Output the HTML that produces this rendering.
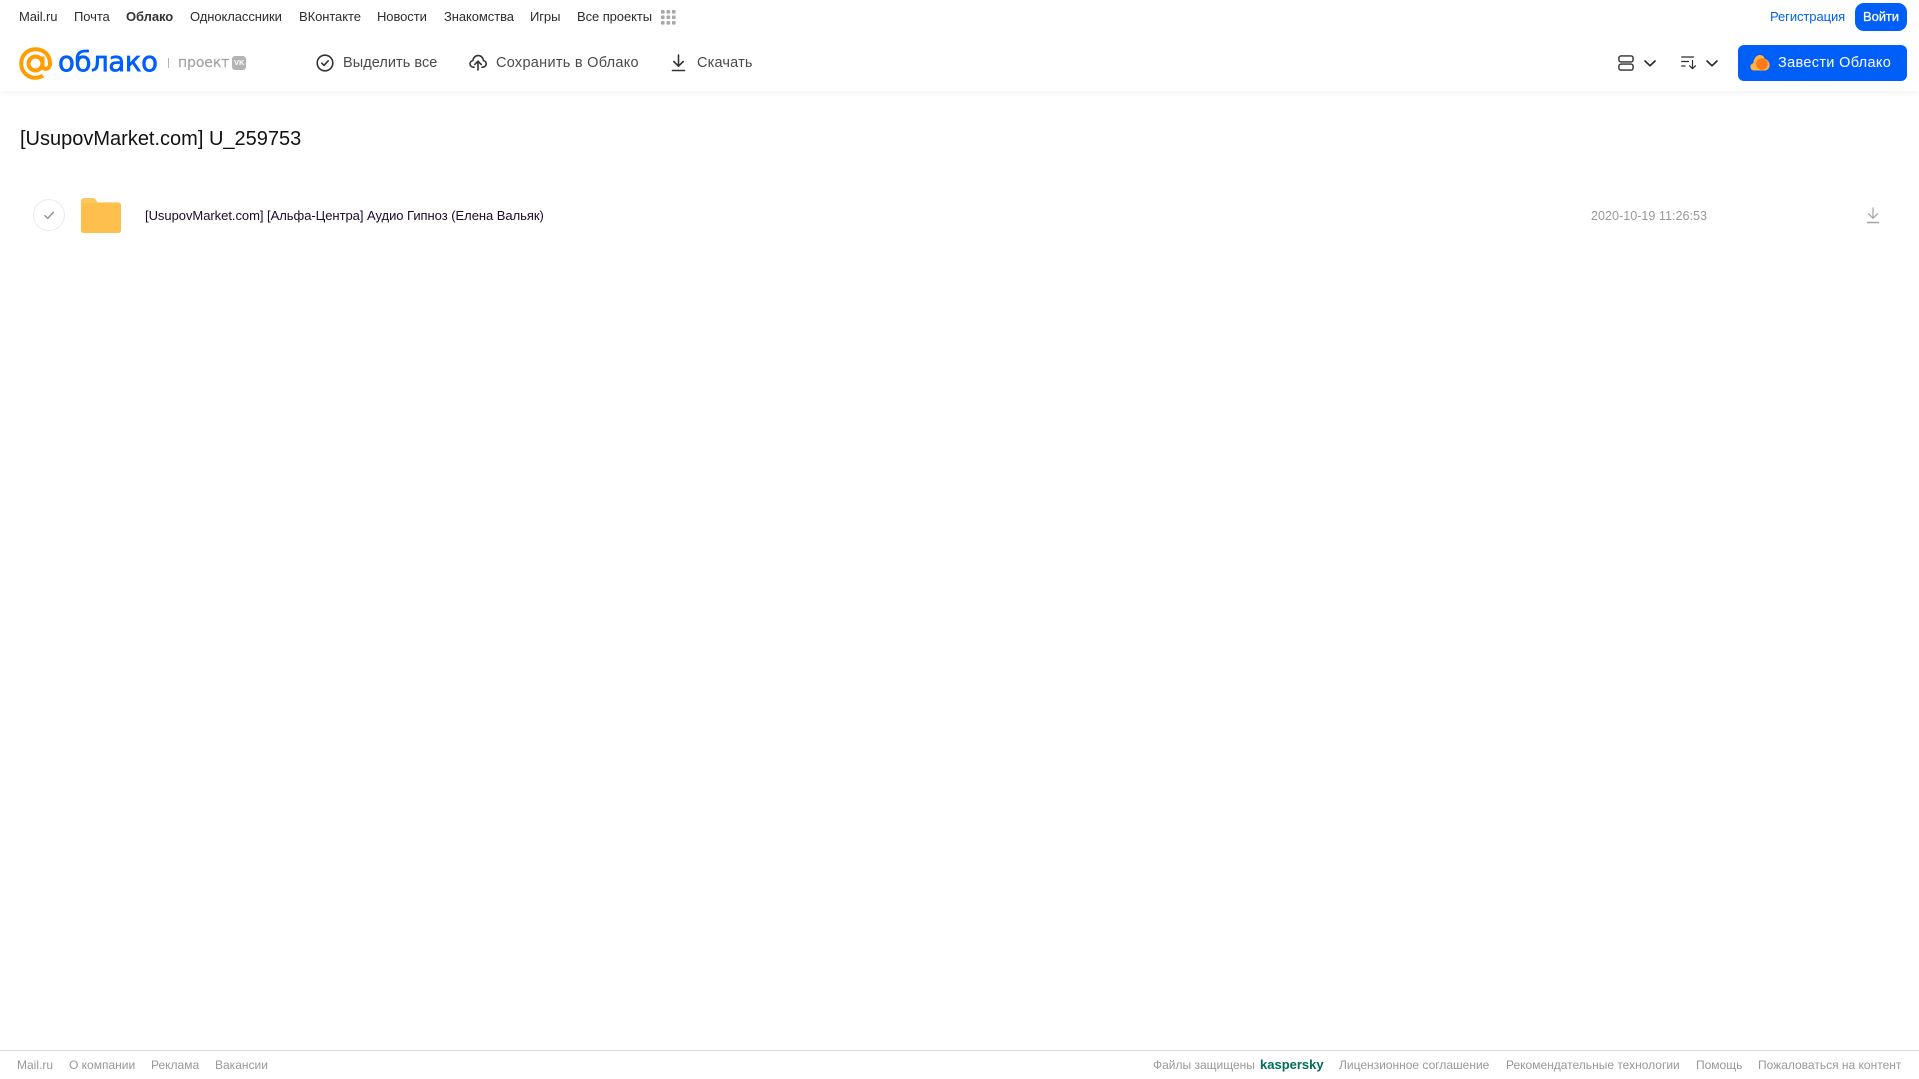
<!DOCTYPE html>
<html lang="ru">
<head>
<meta charset="utf-8">
<title>Облако</title>
<style>
html,body{margin:0;padding:0;background:#fff;width:1919px;height:1079px;overflow:hidden}
body{position:relative;font-family:"Liberation Sans",Arial,sans-serif}
.t{position:absolute;white-space:nowrap;line-height:20px;height:20px}
.n{top:7px;font-size:13px;color:#2c2d2e;letter-spacing:-.08px}
.a{top:53px;font-size:14.5px;color:#4a4a4a;letter-spacing:.2px}
.f{top:1055px;font-size:12px;color:#999}
svg{position:absolute;overflow:visible}
#hd{position:absolute;left:0;top:0;width:1919px;height:91px;background:#fff;box-shadow:0 1px 6px rgba(0,0,0,.07)}
</style>
</head>
<body>
<div id="hd"></div>

<span class="t n" style="left:19px">Mail.ru</span>
<span class="t n" style="left:74px">Почта</span>
<span class="t n" style="left:126px;font-weight:bold;color:#333">Облако</span>
<span class="t n" style="left:190px">Одноклассники</span>
<span class="t n" style="left:299px">ВКонтакте</span>
<span class="t n" style="left:377px">Новости</span>
<span class="t n" style="left:444px">Знакомства</span>
<span class="t n" style="left:530px">Игры</span>
<span class="t n" style="left:577px">Все проекты</span>
<svg style="left:661px;top:10px" width="15" height="15" fill="#a8a8a8">
<rect x="0" y="0" width="3.6" height="3.6" rx=".8"/><rect x="5.5" y="0" width="3.6" height="3.6" rx=".8"/><rect x="11" y="0" width="3.6" height="3.6" rx=".8"/>
<rect x="0" y="5.5" width="3.6" height="3.6" rx=".8"/><rect x="5.5" y="5.5" width="3.6" height="3.6" rx=".8"/><rect x="11" y="5.5" width="3.6" height="3.6" rx=".8"/>
<rect x="0" y="11" width="3.6" height="3.6" rx=".8"/><rect x="5.5" y="11" width="3.6" height="3.6" rx=".8"/><rect x="11" y="11" width="3.6" height="3.6" rx=".8"/>
</svg>

<span class="t n" style="left:1770px;color:#005ff9">Регистрация</span>
<div style="position:absolute;left:1855px;top:3px;width:52px;height:28px;border-radius:9px;background:#005ff9"></div>
<span class="t n" style="left:1863px;color:#fff;-webkit-text-stroke:.25px #fff">Войти</span>

<!-- logo -->
<svg style="left:19px;top:47px" width="34" height="33" viewBox="0 0 34 33" fill="none" stroke="#ff9e00" stroke-width="4">
<circle cx="16.5" cy="16.5" r="7"/>
<path d="M23.5 9.5V18.5C23.5 23.5 31 23 31 16.5C31 7.5 24.5 2.2 16.5 2.2C8.5 2.2 2.2 8.5 2.2 16.5C2.2 24.5 8.5 30.8 16.5 30.8C19.5 30.8 21.8 30 24 28.6"/>
</svg>
<span class="t" style="left:58px;top:49px;height:26px;line-height:26px;font-family:'DejaVu Sans',sans-serif;font-size:27.5px;color:#005ff9;-webkit-text-stroke:.7px #005ff9;letter-spacing:-.33px">облако</span>
<div style="position:absolute;left:168px;top:58px;width:1px;height:10px;background:#b5b5b5"></div>
<span class="t" style="left:178px;top:53px;font-family:'DejaVu Sans',sans-serif;font-size:14px;color:#a3a3a3;-webkit-text-stroke:.2px #a3a3a3;letter-spacing:-.1px">проект</span>
<div style="position:absolute;left:232px;top:56px;width:14px;height:14px;border-radius:3px;background:#b4b4b4"></div>
<span class="t" style="left:234px;top:53px;font-size:7.5px;font-weight:bold;color:#fff">VK</span>

<!-- toolbar -->
<svg style="left:316px;top:54px" width="18" height="18" viewBox="0 0 18 18" fill="none" stroke="#333" stroke-width="1.6" stroke-linecap="round" stroke-linejoin="round">
<circle cx="9" cy="9" r="7.8"/><path d="M5.8 9.2L8 11.4L12.2 6.8"/>
</svg>
<span class="t a" style="left:343px;letter-spacing:.05px">Выделить все</span>

<svg style="left:469px;top:53px" width="18" height="18" viewBox="0 0 18 18" fill="none" stroke="#333" stroke-width="1.6" stroke-linecap="round" stroke-linejoin="round">
<path d="M5 14.2H4.5C2.5 14.2 1 12.7 1 10.9C1 9.2 2.2 7.9 3.8 7.6C4.2 4.7 6.4 2.6 9.2 2.6C12 2.6 14.2 4.7 14.5 7.5C16 7.8 17.2 9.2 17.2 10.9C17.2 12.7 15.7 14.2 13.8 14.2H13"/>
<path d="M9 17V8.5M5.8 11.4L9 8.2L12.2 11.4"/>
</svg>
<span class="t a" style="left:496px;letter-spacing:.28px">Сохранить в Облако</span>

<svg style="left:671px;top:54px" width="15" height="18" viewBox="0 0 15 18" fill="none" stroke="#333" stroke-width="1.6" stroke-linecap="round" stroke-linejoin="round">
<path d="M7.5 1V12M2.8 7.5L7.5 12.2L12.2 7.5"/><path d="M1.5 16.5H13.5"/>
</svg>
<span class="t a" style="left:697px;letter-spacing:.18px">Скачать</span>

<!-- view -->
<svg style="left:1618px;top:55px" width="16" height="16" viewBox="0 0 16 16" fill="none" stroke="#2c2d2e" stroke-width="1.4">
<rect x=".9" y=".9" width="14.2" height="6" rx="2"/><rect x=".9" y="9.1" width="14.2" height="6" rx="2"/>
</svg>
<svg style="left:1644px;top:60px" width="12" height="7" viewBox="0 0 12 7" fill="none" stroke="#2c2d2e" stroke-width="1.7" stroke-linecap="round" stroke-linejoin="round"><path d="M1 1L6 5.8L11 1"/></svg>
<svg style="left:1681px;top:56px" width="16" height="14" viewBox="0 0 16 14" fill="none" stroke="#2c2d2e" stroke-width="1.2" stroke-linecap="round" stroke-linejoin="round">
<path d="M.7 1H12.5M.7 5.5H7.5M.7 10H4"/><path d="M11.5 4.5V12.5M8.6 9.8L11.5 12.7L14.4 9.8"/>
</svg>
<svg style="left:1706px;top:60px" width="12" height="7" viewBox="0 0 12 7" fill="none" stroke="#2c2d2e" stroke-width="1.7" stroke-linecap="round" stroke-linejoin="round"><path d="M1 1L6 5.8L11 1"/></svg>

<div style="position:absolute;left:1738px;top:45px;width:169px;height:36px;border-radius:6px;background:#005ff9"></div>
<svg style="left:1750px;top:54px" width="20" height="17" viewBox="0 0 20 17">
<path d="M4 16.5C1.8 16.5 .4 14.8 .4 12.8C.4 11 1.6 9.6 3.3 9.2C3.8 4.2 6.6 1 9.8 1C12.2 1 14 2.4 14.8 4.8C17.6 5.6 19.6 8.2 19.6 11.2C19.6 14.4 17.2 16.5 14.4 16.5Z" fill="#ffb341"/>
<circle cx="12" cy="10" r="5.8" fill="#ff7a1a"/>
</svg>
<span class="t a" style="left:1778px;color:#fff;letter-spacing:.33px">Завести Облако</span>

<!-- title -->
<span class="t" style="left:20px;top:127px;height:24px;line-height:24px;font-size:20px;color:#111">[UsupovMarket.com] U_259753</span>

<!-- row -->
<svg style="left:33px;top:199px" width="32" height="32" viewBox="0 0 32 32" fill="none">
<circle cx="16" cy="16" r="15.5" stroke="#ececec" fill="#fff"/>
<path d="M11.5 16.3L14.8 19.4L20.6 13" stroke="#8f8f8f" stroke-width="1.4"/>
</svg>
<svg style="left:81px;top:198px" width="40" height="35" viewBox="0 0 40 36" preserveAspectRatio="none">
<path d="M0 3C0 1.3 1.3 0 3 0H11.5C13 0 14.3.6 15 1.8L16.5 4.5H37C38.7 4.5 40 5.8 40 7.5V33C40 34.7 38.7 36 37 36H3C1.3 36 0 34.7 0 33Z" fill="#ffc75f"/>
<path d="M0 7C0 5.8 1 5 2 5H38C39.2 5 40 5.9 40 7V33C40 34.7 38.7 36 37 36H3C1.3 36 0 34.7 0 33Z" fill="#ffbf4d"/>
</svg>
<span class="t" style="left:145px;top:206px;font-size:13px;color:#1b0a2a;letter-spacing:-.04px">[UsupovMarket.com] [Альфа-Центра] Аудио Гипноз (Елена Вальяк)</span>
<span class="t" style="left:1591px;top:206px;font-size:12.6px;color:#999">2020-10-19 11:26:53</span>
<svg style="left:1866px;top:207px" width="14" height="17" viewBox="0 0 14 17" fill="none" stroke="#a8a8a8" stroke-width="1.3">
<path d="M7 .5V11M2.2 6.4L7 11.2L11.8 6.4"/><path d="M1 15.5H13" stroke-width="1.6"/>
</svg>

<!-- footer -->
<div style="position:absolute;left:0;top:1050px;width:1919px;height:1px;background:#d9d9d9"></div>
<span class="t f" style="left:17px">Mail.ru</span>
<span class="t f" style="left:69px">О компании</span>
<span class="t f" style="left:151px">Реклама</span>
<span class="t f" style="left:215px">Вакансии</span>
<span class="t f" style="left:1153px">Файлы защищены</span>
<span class="t f" style="left:1260px;color:#006d5c;font-weight:bold;font-size:13px">kaspersky</span>
<span class="t f" style="left:1339px">Лицензионное соглашение</span>
<span class="t f" style="left:1506px">Рекомендательные технологии</span>
<span class="t f" style="left:1696px">Помощь</span>
<span class="t f" style="left:1758px">Пожаловаться на контент</span>
</body>
</html>
